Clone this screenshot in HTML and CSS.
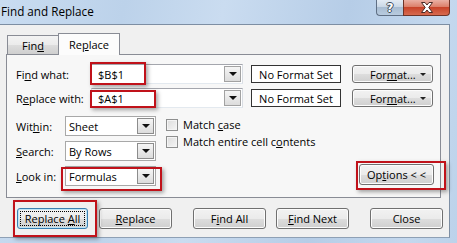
FILE: index.html
```html
<!DOCTYPE html>
<html>
<head>
<meta charset="utf-8">
<link rel="stylesheet" href="styles.css">
</head>
<body>
<div class="window">
  <div class="titlebar">
    <span class="title">Find and Replace</span>
    <div class="caption">
      <div class="cap help"><span class="q">?</span></div>
      <div class="cap close">
        <svg width="14" height="11" viewBox="0 0 14 11"><path d="M1.5 0.5 H5 L7 3 L9 0.5 H12.5 L8.8 5.5 L12.5 10.5 H9 L7 8 L5 10.5 H1.5 L5.2 5.5 Z" fill="#fff" stroke="#4a2a25" stroke-width="1"/></svg>
      </div>
    </div>
  </div>
  <div class="dialog">
    <div class="tabs">
      <div class="tab"><span>Fin<u>d</u></span></div>
      <div class="tab active"><span>Re<u>p</u>lace</span></div>
    </div>
    <div class="panel">
      <div class="row">
        <span class="label">Fi<u>n</u>d what:</span>
        <div class="combo edit"><span class="val">$B$1</span><span class="drop"><i class="arrow"></i></span></div>
        <div class="fmtset">No Format Set</div>
        <div class="btn fmt"><span>For<u>m</u>at...</span><i class="caret"></i></div>
      </div>
      <div class="row">
        <span class="label">R<u>e</u>place with:</span>
        <div class="combo edit"><span class="val">$A$1</span><span class="drop"><i class="arrow"></i></span></div>
        <div class="fmtset">No Format Set</div>
        <div class="btn fmt"><span>For<u>m</u>at...</span><i class="caret"></i></div>
      </div>
      <div class="lower">
        <div class="selects">
          <div class="srow"><span class="slabel">Wit<u>h</u>in:</span><div class="combo sel"><span class="val">Sheet</span><span class="drop"><i class="arrow"></i></span></div></div>
          <div class="srow"><span class="slabel"><u>S</u>earch:</span><div class="combo sel"><span class="val">By Rows</span><span class="drop"><i class="arrow"></i></span></div></div>
          <div class="srow"><span class="slabel"><u>L</u>ook in:</span><div class="combo sel"><span class="val">Formulas</span><span class="drop"><i class="arrow"></i></span></div></div>
        </div>
        <div class="checks">
          <div class="check"><span class="box"></span><span>Match <u>c</u>ase</span></div>
          <div class="check"><span class="box"></span><span>Match entire cell c<u>o</u>ntents</span></div>
        </div>
        <div class="btn opt"><span>Op<u>t</u>ions &lt; &lt;</span></div>
      </div>
    </div>
    <div class="buttons">
      <div class="btn bb default"><span class="focus"><span>Replace <u>A</u>ll</span></span></div>
      <div class="btn bb b2"><span><u>R</u>eplace</span></div>
      <div class="btn bb b3"><span>F<u>i</u>nd All</span></div>
      <div class="btn bb b4"><span><u>F</u>ind Next</span></div>
      <div class="btn bb b5"><span>Close</span></div>
    </div>
  </div>
  <div class="annot a1"></div>
  <div class="annot a2"></div>
  <div class="annot a3"></div>
  <div class="annot a4"></div>
  <div class="annot a5"></div>
</div>
</body>
</html>
```
FILE: styles.css
```css
* { box-sizing: border-box; }
html, body { margin: 0; padding: 0; }
body {
  width: 457px; height: 243px; overflow: hidden;
  font-family: "Open Sans", "Noto Sans", sans-serif;
  font-size: 11px; color: #000;
}
u { text-decoration: underline; text-underline-offset: 1px; }
.window {
  position: relative; width: 457px; height: 243px;
  background: linear-gradient(100deg, #c9dcf1 0%, #bcd2ea 25%, #cadcf0 45%, #b6cde7 70%, #c4d8ee 90%, #bcd2ea 100%);
}
.titlebar { height: 24px; display: flex; align-items: flex-start; padding-right: 7px; }
.title { font-size: 11.7px; line-height: 22px; padding-left: 1px; }
.caption { margin-left: auto; display: flex; }
.cap { height: 16px; border: 1px solid #5f6f84; border-top: none; display: flex; align-items: center; justify-content: center; }
.help {
  width: 27px; border-right: none; border-radius: 0 0 0 4px;
  background: linear-gradient(#e3ebf4 0%, #cbd8e6 45%, #a9bdd2 50%, #b8cbdf 100%);
}
.q { color: #fff; font-family: "DejaVu Sans", sans-serif; font-weight: bold; font-size: 12px; line-height: 14px;
  text-shadow: 1px 0 0 #3d4a5a, -1px 0 0 #3d4a5a, 0 1px 0 #3d4a5a, 0 -1px 0 #3d4a5a; }
.close {
  width: 47px; border-radius: 0 0 4px 0; border-color: #6e3327;
  background: linear-gradient(#eab0a4 0%, #dc806a 45%, #c8442a 50%, #d76a4f 100%);
}
.dialog {
  width: 450px; height: 214px; background: #f0f0f0;
  border-top: 1px solid #7d8ea3; border-right: 1px solid #7d8ea3; border-bottom: 1px solid #8ea0b5;
}
.tabs { display: flex; align-items: flex-end; height: 29px; padding: 8px 0 0 7px; }
.tab {
  border: 1px solid #898c95; border-bottom: none; display: flex; align-items: center; justify-content: center;
}
.tab:first-child {
  width: 51px; height: 19px; border-right: none;
  background: linear-gradient(#f3f3f3 0%, #ebebeb 50%, #dddddd 51%, #cfcfcf 100%);
  padding-top: 1px;
}
.tab.active {
  width: 62px; height: 22px; margin-bottom: -1px; position: relative; z-index: 1;
  background: #fcfcfc;
}
.panel {
  margin-left: 6px; width: 435px; height: 144px;
  border: 1px solid #898c95; background: #f7f7f7;
  padding: 9px 6px 0 9px;
}
.row { display: flex; align-items: center; height: 20px; margin-bottom: 4px; }
.label { width: 75px; }
.combo {
  display: flex; align-items: center; height: 20px; background: #fff;
  border: 1px solid #abadb3; border-color: #a4a6ad #d9dde3 #e3e9ef #d9dde3;
}
.combo.edit { width: 152px; padding-left: 6px; }
.combo.sel { width: 91px; padding-left: 3px; border-color: #a8a8a8; }
.val { flex: 1; }
.drop {
  width: 17px; height: 16px; margin-right: 1px;
  border: 1px solid #a2a2a2; background: linear-gradient(#f5f5f5, #dcdcdc);
  display: flex; align-items: center; justify-content: center;
}
.combo.sel .drop { border-color: #8c8c8c; }
.arrow { width: 0; height: 0; border-left: 4px solid transparent; border-right: 4px solid transparent; border-top: 4px solid #111; }
.fmtset {
  width: 90px; height: 18px; margin-left: 8px; border: 1px solid #333; background: #fff;
  display: flex; align-items: center; justify-content: center;
}
.btn {
  display: flex; align-items: center; justify-content: center;
  border: 1px solid #707070; border-radius: 3px;
  background: linear-gradient(#f2f2f2 0%, #ebebeb 50%, #dddddd 51%, #cfcfcf 100%);
  box-shadow: inset 0 0 0 1px #fcfcfc;
}
.fmt { width: 81px; height: 18px; margin-left: 11px; justify-content: flex-start; padding-left: 17px; }
.caret { margin-left: auto; margin-right: 6px; width: 0; height: 0; border-left: 3px solid transparent; border-right: 3px solid transparent; border-top: 3px solid #222; }
.lower { display: flex; margin-top: 8px; }
.selects { display: flex; flex-direction: column; gap: 5px; }
.srow { display: flex; align-items: center; height: 20px; }
.slabel { width: 49px; }
.checks { margin-left: 10px; }
.check { display: flex; align-items: center; height: 17px; }
.box {
  width: 12px; height: 12px; margin-right: 5px; border: 1px solid #8e8f8f;
  background: linear-gradient(135deg, #dcdcdc, #f6f6f6);
  box-shadow: inset 0 0 0 1px #f4f4f4;
}
.opt { margin-left: auto; align-self: flex-end; width: 75px; height: 21px; margin-bottom: 1px; }
.buttons { display: flex; padding: 10px 0 0 17px; }
.bb { height: 21px; width: 73px; }
.default { width: 71px; border-color: #3c7fb1; box-shadow: inset 0 0 0 1px #bde6f8; padding: 2px; }
.focus { flex: 1; align-self: stretch; display: flex; align-items: center; justify-content: center; border: 1px dotted #000; }
.b2 { margin-left: 11px; }
.b3 { margin-left: 21px; }
.b4 { margin-left: 10px; }
.b5 { margin-left: 21px; }
.annot {
  position: absolute; border: 2px solid #c0121a;
  box-shadow: 2px 2px 4px rgba(0,0,0,0.35);
}
.a1 { left: 90px; top: 62px; width: 56px; height: 23px; }
.a2 { left: 90px; top: 90px; width: 66px; height: 18px; }
.a3 { left: 61px; top: 167px; width: 101px; height: 24px; }
.a4 { left: 356px; top: 161px; width: 90px; height: 29px; }
.a5 { left: 13px; top: 200px; width: 84px; height: 37px; }
```
